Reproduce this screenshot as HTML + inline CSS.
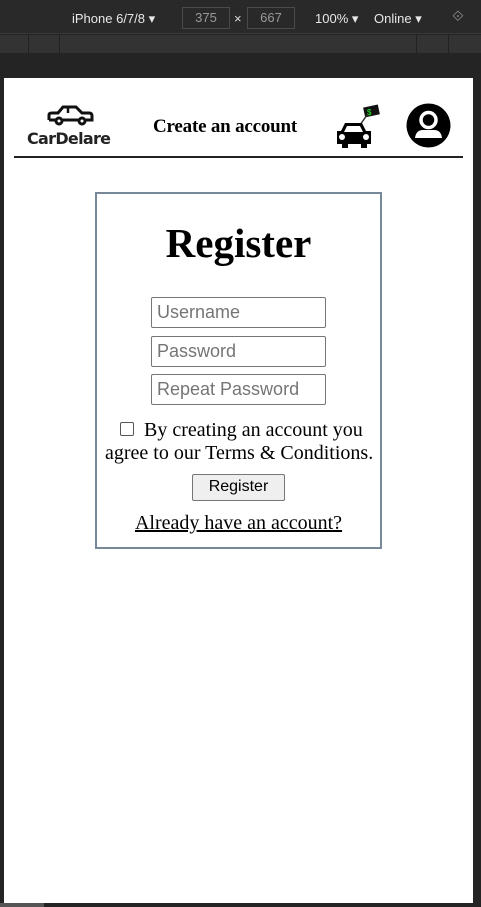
<!DOCTYPE html>
<html><head><style>
*{box-sizing:border-box}
body{margin:0;width:481px;height:907px;background:#242424;position:relative;overflow:hidden;font-family:"Liberation Serif",serif}
.a{position:absolute}
.top{left:0;top:0;width:481px;height:34px;background:#292929;border-bottom:1px solid #3a3a3a;color:#e8e8e8;font:13px "Liberation Sans",sans-serif}
.ruler{left:0;top:35px;width:481px;height:18px;background:#333}
.page{left:4px;top:78px;width:469px;height:825px;background:#fff}
input.f{position:absolute;left:151px;width:175px;height:31px;border:1px solid #767676;border-radius:2px;font:18px "Liberation Sans",sans-serif;padding:0 5px;color:#757575}
</style></head><body>
<div class="a top">
 <span class="a" style="left:72px;top:11px">iPhone 6/7/8 ▾</span>
 <div class="a" style="left:182px;top:7px;width:48px;height:22px;border:1px solid #4a4a4a;color:#999;text-align:center;line-height:20px">375</div>
 <span class="a" style="left:234px;top:11px;color:#ddd">×</span>
 <div class="a" style="left:247px;top:7px;width:48px;height:22px;border:1px solid #4a4a4a;color:#999;text-align:center;line-height:20px">667</div>
 <span class="a" style="left:315px;top:11px">100% ▾</span>
 <span class="a" style="left:374px;top:11px">Online ▾</span>
 <span class="a" style="left:452px;top:8px;color:#888;font-size:15px">⟐</span>
</div>
<div class="a ruler"></div>
<div class="a" style="left:28px;top:35px;width:1px;height:18px;background:#222"></div>
<div class="a" style="left:59px;top:35px;width:1px;height:18px;background:#222"></div>
<div class="a" style="left:416px;top:35px;width:1px;height:18px;background:#222"></div>
<div class="a" style="left:448px;top:35px;width:1px;height:18px;background:#222"></div>
<div class="a page"></div>
<div class="a" style="left:0;top:903px;width:44px;height:4px;background:#555"></div>
<!-- logo -->
<svg class="a" style="left:46px;top:104px" width="48" height="24" viewBox="0 0 48 24"><path d="M3 16 V11 Q3 9 6 9 H12 L17 3 H30 L36 9 H43 Q46 9 46 12 V16 H40 M32 16 H17 M10 16 H3" fill="none" stroke="#111" stroke-width="3"/><path d="M22 4 V9" stroke="#111" stroke-width="2.5"/><circle cx="13" cy="17" r="3" fill="none" stroke="#111" stroke-width="3"/><circle cx="36" cy="17" r="3" fill="none" stroke="#111" stroke-width="3"/></svg>
<div class="a" style="left:27px;top:129px;font:bold 16px 'DejaVu Sans',sans-serif;color:#222;letter-spacing:-0.7px">CarDelare</div>
<div class="a" style="left:153px;top:116px;font:bold 19px 'Liberation Serif',serif;letter-spacing:-0.2px">Create an account</div>
<!-- car sell -->
<svg class="a" style="left:336px;top:103px" width="46" height="45" viewBox="0 0 46 45"><rect x="28" y="3" width="15" height="10" fill="#111" transform="rotate(-12 35 8)"/><text x="31" y="12" font-size="8" font-weight="bold" fill="#2c2" font-family="Liberation Sans">$</text><path d="M31 12 L24 22" stroke="#333" stroke-width="1.5"/><path d="M9 20 H26 L30 28 H35 V41 H31 V45 H25 V41 H12 V45 H6 V41 H1 V28 H5 Z" fill="#000"/><path d="M11 23 H24 L27 29 H8 Z" fill="#fff"/><circle cx="6" cy="34" r="3" fill="#fff"/><circle cx="30" cy="34" r="3" fill="#fff"/></svg>
<!-- user -->
<svg class="a" style="left:406px;top:103px" width="45" height="45" viewBox="0 0 45 45"><circle cx="22.5" cy="22.5" r="22" fill="#000"/><circle cx="22.5" cy="17" r="7.5" fill="none" stroke="#fff" stroke-width="3.5"/><path d="M9 35 Q10 27 17 27 H28 Q35 27 36 35 Z" fill="#fff"/></svg>
<div class="a" style="left:14px;top:156px;width:449px;height:2px;background:#222"></div>
<!-- form -->
<div class="a" style="left:95px;top:192px;width:287px;height:357px;border:2px solid #778899"></div>
<div class="a" style="left:95px;top:219px;width:287px;text-align:center;font:bold 41px 'Liberation Serif',serif">Register</div>
<input class="f" style="top:297px" placeholder="Username">
<input class="f" style="top:336px" placeholder="Password">
<input class="f" style="top:374px" placeholder="Repeat Password">
<div class="a" style="left:120px;top:422px;width:14px;height:14px;border:1px solid #555;border-radius:2px"></div>
<div class="a" style="left:144px;top:419px;font-size:20px;white-space:nowrap">By creating an account you</div>
<div class="a" style="left:105px;top:442px;font-size:20px;white-space:nowrap">agree to our Terms &amp; Conditions.</div>
<div class="a" style="left:192px;top:474px;width:93px;height:27px;border:1px solid #767676;border-radius:2px;background:#efefef;font:16px 'Liberation Sans',sans-serif;text-align:center;line-height:24px">Register</div>
<div class="a" style="left:95px;top:512px;width:287px;text-align:center;font-size:20px;text-decoration:underline">Already have an account?</div>
</body></html>
